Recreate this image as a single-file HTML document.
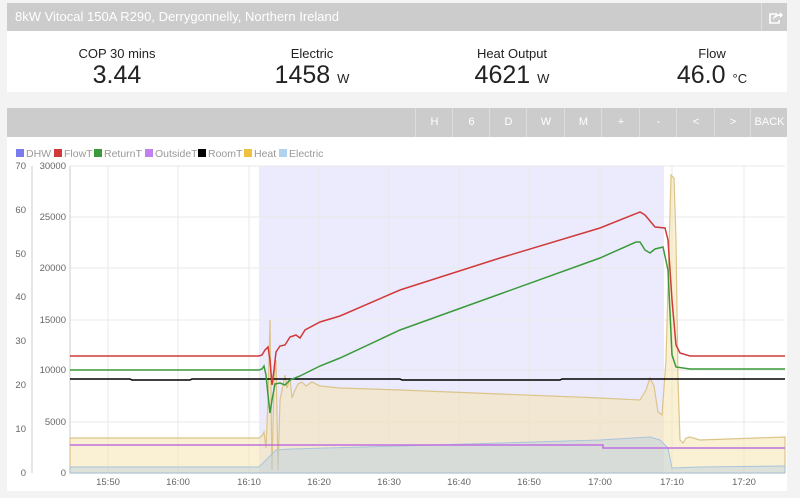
<!DOCTYPE html>
<html><head><meta charset="utf-8"><style>
body{margin:0;width:800px;height:498px;background:#f3f3f3;font-family:"Liberation Sans",sans-serif;overflow:hidden;position:relative}
.hdr{position:absolute;left:7px;top:3px;width:780px;height:28px;background:#cccccc;color:#fff;font-size:13px;line-height:28px}
.hdr span{margin-left:8px}
.share{position:absolute;right:0;top:0;width:25px;height:28px;border-left:1px solid #ddd}
.stats{position:absolute;left:7px;top:31px;width:780px;height:61px;background:#fff}
.st{position:absolute;top:15px;text-align:center;color:#222}
.st .l{font-size:13px}
.st .v{font-size:25px;line-height:29px}
.st .u{font-size:13px;margin-left:7px}
.tb{position:absolute;left:7px;top:108px;width:780px;height:29px;background:#cccccc}
.btn{position:absolute;top:0;height:29px;line-height:29px;color:#fff;font-size:11px;text-align:center;border-left:1px solid #ddd}
.chart{position:absolute;left:7px;top:137px;width:780px;height:354px;background:#fff}
</style></head><body>
<div class="hdr"><span>8kW Vitocal 150A R290, Derrygonnelly, Northern Ireland</span>
<div class="share"><svg width="25" height="28" viewBox="0 0 25 28"><path d="M15 11H8v9h9v-3" fill="none" stroke="#fff" stroke-width="1.6"/><path d="M11 17c0-4 3-6 7-6V9l3 3-3 3v-2c-3 0-5 1-7 4z" fill="#fff"/></svg></div></div>
<div class="stats">
<div class="st" style="left:55px;width:110px"><div class="l">COP 30 mins</div><div class="v">3.44</div></div>
<div class="st" style="left:250px;width:110px"><div class="l">Electric</div><div class="v">1458<span class="u">W</span></div></div>
<div class="st" style="left:450px;width:110px"><div class="l">Heat Output</div><div class="v">4621<span class="u">W</span></div></div>
<div class="st" style="left:650px;width:110px"><div class="l">Flow</div><div class="v">46.0<span class="u">°C</span></div></div>
</div>
<div class="tb">
<div class="btn" style="left:408px;width:37px">H</div>
<div class="btn" style="left:445px;width:37px">6</div>
<div class="btn" style="left:482px;width:37px">D</div>
<div class="btn" style="left:519px;width:38px">W</div>
<div class="btn" style="left:557px;width:37px">M</div>
<div class="btn" style="left:594px;width:38px">+</div>
<div class="btn" style="left:632px;width:37px">-</div>
<div class="btn" style="left:669px;width:38px">&lt;</div>
<div class="btn" style="left:707px;width:36px">&gt;</div>
<div class="btn" style="left:743px;width:37px">BACK</div>
</div>
<div class="chart"></div>
<svg style="position:absolute;left:0;top:0" width="800" height="498" font-family="Liberation Sans,sans-serif">
<g font-size="10.5" fill="#999">
<rect x="16" y="149" width="8" height="8" fill="#7b7bf0"/><text x="26" y="157">DHW</text>
<rect x="54" y="149" width="8" height="8" fill="#d03a3a"/><text x="64" y="157">FlowT</text>
<rect x="94" y="149" width="8" height="8" fill="#3a9a3a"/><text x="104" y="157">ReturnT</text>
<rect x="145" y="149" width="8" height="8" fill="#c080f0"/><text x="155" y="157">OutsideT</text>
<rect x="198" y="149" width="8" height="8" fill="#000"/><text x="208" y="157">RoomT</text>
<rect x="244" y="149" width="8" height="8" fill="#f0c040"/><text x="254" y="157">Heat</text>
<rect x="279" y="149" width="8" height="8" fill="#b0d4f0"/><text x="289" y="157">Electric</text>
</g>
<rect x="259" y="166" width="405" height="307" fill="#ebebfd"/>
<g stroke="#e8e8e8" stroke-width="1">
<path d="M70 166H785M70 217H785M70 268H785M70 320H785M70 370H785M70 422H785"/>
<path d="M108 166V473M178 166V473M249 166V473M319 166V473M389 166V473M459 166V473M529 166V473M600 166V473M672 166V473M744 166V473"/>
</g>
<path d="M32 166V473M70 166V473" stroke="#ccc"/>
<g font-size="9.5" fill="#666" text-anchor="end">
<text x="26" y="169">70</text><text x="26" y="213">60</text><text x="26" y="257">50</text><text x="26" y="300">40</text><text x="26" y="344">30</text><text x="26" y="388">20</text><text x="26" y="432">10</text><text x="26" y="476">0</text>
<text x="66" y="169">30000</text><text x="66" y="220">25000</text><text x="66" y="271">20000</text><text x="66" y="323">15000</text><text x="66" y="373">10000</text><text x="66" y="425">5000</text><text x="66" y="476">0</text>
</g>
<g font-size="9.5" fill="#666" text-anchor="middle">
<text x="108" y="485">15:50</text><text x="178" y="485">16:00</text><text x="249" y="485">16:10</text><text x="319" y="485">16:20</text><text x="389" y="485">16:30</text><text x="459" y="485">16:40</text><text x="529" y="485">16:50</text><text x="600" y="485">17:00</text><text x="672" y="485">17:10</text><text x="744" y="485">17:20</text>
</g>
<path d="M70 438H259L262 436 264 432 266 448 268 400 270 320 272 470 274 380 276 360 278 470 280 400 283 385 285 375 287 388 290 378 292 398 295 390 298 384 302 382 306 386 312 382 320 386 340 388 400 390 500 394 600 398 640 400 646 390 650 378 654 386 658 412 662 415 666 360 669 250 671 175 674 178 676 240 678 380 680 440 683 443 686 438 690 437 700 440 785 437V473H70Z" fill="#f5e3b0" fill-opacity="0.55" stroke="#dcc48a" stroke-width="1.2"/>
<path d="M70 467H259L264 462 268 458 272 454 276 450 290 449 400 446 500 443 600 440 650 437 660 440 668 448 672 468 700 467 785 466V473H70Z" fill="#b8cfe0" fill-opacity="0.45" stroke="#a8c4dc" stroke-width="1"/>
<path d="M70 445H603V448H785" fill="none" stroke="#c070e0" stroke-width="1.5"/>
<path d="M70 379H130L132 380H190L192 379H400L402 380H560L562 379H785" fill="none" stroke="#000" stroke-width="1.5"/>
<path d="M70 356H259L262 355 265 350 268 347 270 360 272 385 274 370 276 352 280 346 285 345 290 337 296 335 300 338 305 330 320 322 340 316 400 290 500 258 600 228 640 212 645 215 655 227 665 228 668 240 672 300 676 345 680 353 690 356 785 356" fill="none" stroke="#d03a3a" stroke-width="1.5"/>
<path d="M70 370H259L262 369 264 366 266 375 268 395 270 413 272 400 275 384 280 383 285 385 290 380 300 376 320 366 340 358 400 330 500 294 600 258 636 242 640 242 645 250 650 253 655 249 663 247 668 270 672 355 676 367 690 369 785 369" fill="none" stroke="#3a9a3a" stroke-width="1.5"/>
</svg>
</body></html>
